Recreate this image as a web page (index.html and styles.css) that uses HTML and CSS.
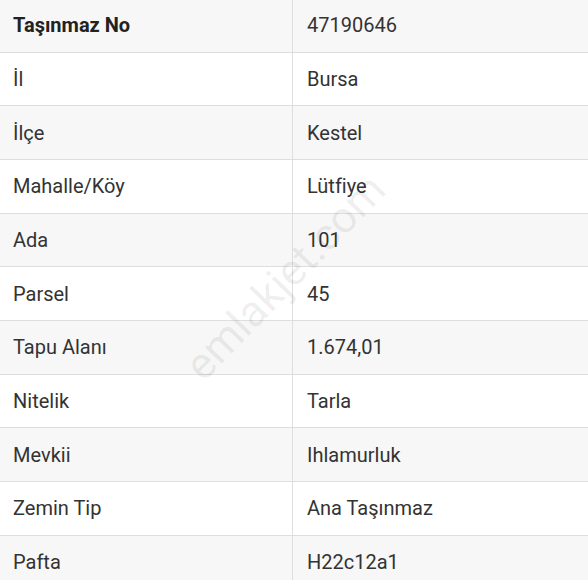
FILE: index.html
```html
<!DOCTYPE html>
<html lang="tr">
<head>
<meta charset="utf-8">
<link rel="stylesheet" href="styles.css">
</head>
<body>
<div class="sheet">
  <div class="table">
    <div class="row head"><div class="cell key">Taşınmaz No</div><div class="cell val">47190646</div></div>
    <div class="row"><div class="cell key">İl</div><div class="cell val">Bursa</div></div>
    <div class="row alt"><div class="cell key">İlçe</div><div class="cell val">Kestel</div></div>
    <div class="row"><div class="cell key">Mahalle/Köy</div><div class="cell val">Lütfiye</div></div>
    <div class="row alt"><div class="cell key">Ada</div><div class="cell val">101</div></div>
    <div class="row"><div class="cell key">Parsel</div><div class="cell val">45</div></div>
    <div class="row alt"><div class="cell key">Tapu Alanı</div><div class="cell val">1.674,01</div></div>
    <div class="row"><div class="cell key">Nitelik</div><div class="cell val">Tarla</div></div>
    <div class="row alt"><div class="cell key">Mevkii</div><div class="cell val">Ihlamurluk</div></div>
    <div class="row"><div class="cell key">Zemin Tip</div><div class="cell val">Ana Taşınmaz</div></div>
    <div class="row alt"><div class="cell key">Pafta</div><div class="cell val">H22c12a1</div></div>
  </div>
  <div class="watermark">emlakjet.com</div>
</div>
</body>
</html>
```

FILE: styles.css
```css
html, body {
  margin: 0;
  padding: 0;
  background: #ffffff;
}
body {
  width: 588px;
  height: 580px;
  overflow: hidden;
  font-family: Roboto, "Liberation Sans", sans-serif;
  font-size: 20px;
  color: #333333;
}
.sheet {
  position: relative;
  width: 588px;
  height: 580px;
  overflow: hidden;
}
.table {
  margin-top: -1px;
  display: flex;
  flex-direction: column;
}
.row {
  display: grid;
  grid-template-columns: 293px 1fr;
  height: 53.67px;
  box-sizing: border-box;
  border-bottom: 1px solid #dedede;
  background: #ffffff;
}
.row.head,
.row.alt {
  background: #f7f7f7;
}
.cell {
  display: flex;
  align-items: center;
  padding-left: 13px;
}
.key {
  border-right: 1px solid #dedede;
}
.val {
  padding-left: 14px;
}
.head .key {
  font-weight: 700;
  color: #222222;
}
.watermark {
  position: absolute;
  left: 285px;
  top: 277px;
  transform: translate(-50%, -50%) rotate(-46deg);
  font-family: Roboto, "Liberation Sans", sans-serif;
  font-weight: 400;
  font-size: 44px;
  color: rgba(0, 0, 0, 0.075);
  white-space: nowrap;
  pointer-events: none;
}
```
